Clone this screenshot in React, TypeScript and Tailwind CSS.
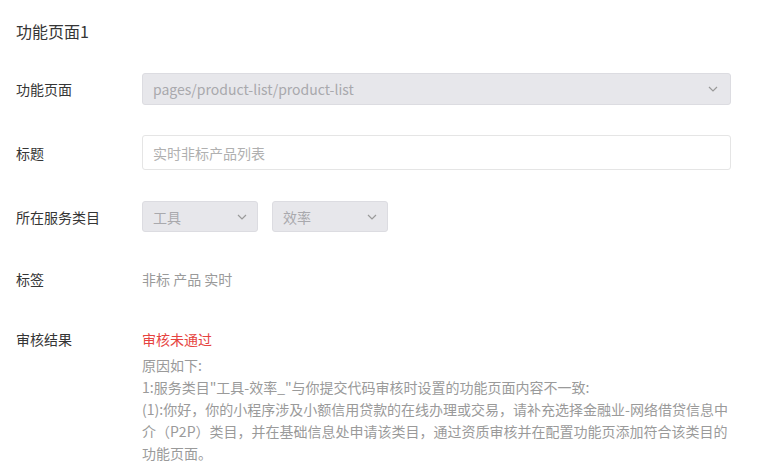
const FONT = "font-['Noto_Sans_CJK_SC','Noto_Sans',sans-serif]";

function Chevron() {
  return (
    <svg width="10" height="6" viewBox="0 0 10 6" className="shrink-0">
      <path d="M1 1l4 4 4-4" fill="none" stroke="#9a9a9a" strokeWidth="1.2" />
    </svg>
  );
}

function Label({ children }: { children: React.ReactNode }) {
  return <div className="w-[126px] shrink-0 text-sm leading-[22px] text-[#353535]">{children}</div>;
}

function DisabledSelect({ value, className }: { value: string; className: string }) {
  return (
    <div
      className={`flex items-center justify-between rounded-[3px] border border-[#dcdce1] bg-[#e7e7eb] pl-[10px] text-sm text-[#a9a9ad] ${className}`}
    >
      <span>{value}</span>
      <Chevron />
    </div>
  );
}

export default function App() {
  const reason = [
    '原因如下:',
    '1:服务类目"工具-效率_"与你提交代码审核时设置的功能页面内容不一致:',
    '(1):你好，你的小程序涉及小额信用贷款的在线办理或交易，请补充选择金融业-网络借贷信息中介（P2P）类目，并在基础信息处申请该类目，通过资质审核并在配置功能页添加符合该类目的功能页面。',
  ];

  return (
    <div className={`h-[473px] w-[758px] overflow-hidden bg-white pl-4 ${FONT}`}>
      <div className="pt-5 text-base leading-[22px] text-[#353535]">功能页面1</div>

      <div className="mt-[31px] flex h-[32px] items-center">
        <Label>功能页面</Label>
        <DisabledSelect value="pages/product-list/product-list" className="h-[32px] w-[589px] pr-[12px]" />
      </div>

      <div className="mt-[30px] flex h-[35px] items-center">
        <Label>标题</Label>
        <div className="flex h-[35px] w-[589px] items-center rounded-[3px] border border-[#e5e5e5] pl-[10px] text-sm text-[#b0b0b0]">
          实时非标产品列表
        </div>
      </div>

      <div className="mt-[31px] flex h-[31px] items-center">
        <Label>所在服务类目</Label>
        <div className="flex gap-[14px]">
          <DisabledSelect value="工具" className="h-[31px] w-[116px] pr-[10px]" />
          <DisabledSelect value="效率" className="h-[31px] w-[116px] pr-[10px]" />
        </div>
      </div>

      <div className="mt-[36px] flex items-center">
        <Label>标签</Label>
        <div className="text-sm leading-[22px] text-[#9a9a9a]">非标 产品 实时</div>
      </div>

      <div className="mt-[38px] flex items-start">
        <Label>审核结果</Label>
        <div className="w-[589px] text-sm">
          <div className="leading-[22px] text-[#e64340]">审核未通过</div>
          <div className="mt-[4px] leading-[22px] text-[#9a9a9a]">
            {reason.map((line) => (
              <p key={line}>{line}</p>
            ))}
          </div>
        </div>
      </div>
    </div>
  );
}
